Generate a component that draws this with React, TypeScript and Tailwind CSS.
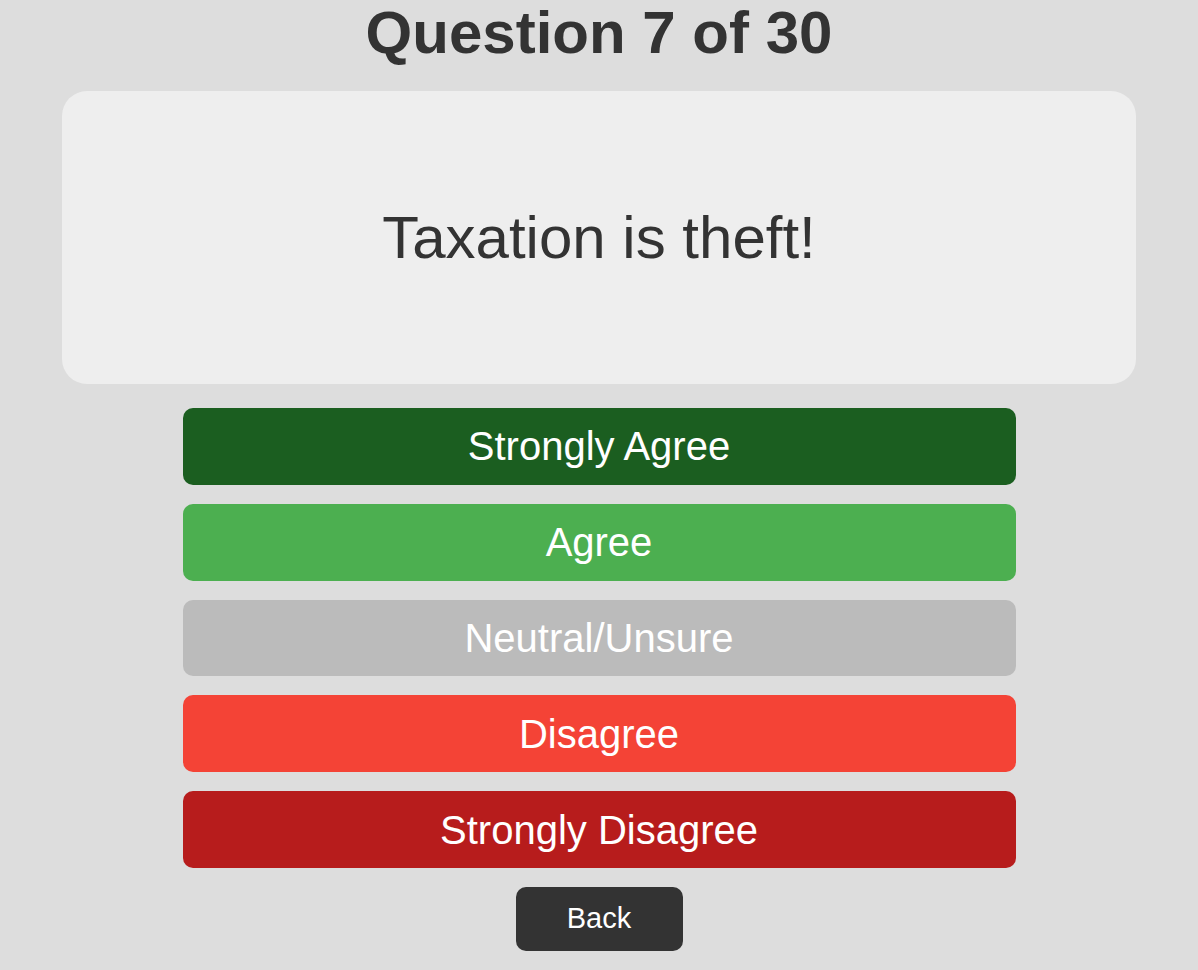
const answers = [
  { label: "Strongly Agree", cls: "bg-[#1b5e20]" },
  { label: "Agree", cls: "bg-[#4caf50]" },
  { label: "Neutral/Unsure", cls: "bg-[#bbbbbb]" },
  { label: "Disagree", cls: "bg-[#f44336]" },
  { label: "Strongly Disagree", cls: "bg-[#b71c1c]" },
];

export default function App() {
  return (
    <div className="min-h-screen bg-[#dddddd] flex flex-col items-center font-['Liberation_Sans',Arial,sans-serif] text-[#333333]">
      <h1 className="text-[60px] leading-[66px] font-bold">Question 7 of 30</h1>

      <div className="mt-[25px] w-[1074px] h-[292.5px] rounded-[25px] bg-[#eeeeee] flex items-center justify-center">
        <p className="text-[60px] leading-[69px]">Taxation is theft!</p>
      </div>

      <div className="mt-[24.5px] w-[833px] flex flex-col gap-[19px]">
        {answers.map((a) => (
          <button
            key={a.label}
            className={`h-[76.8px] rounded-[10px] text-white text-[40px] leading-[46px] ${a.cls}`}
          >
            {a.label}
          </button>
        ))}
      </div>

      <button className="mt-[19px] w-[167px] h-[64px] rounded-[10px] bg-[#333333] text-white text-[29px]">
        Back
      </button>
    </div>
  );
}
